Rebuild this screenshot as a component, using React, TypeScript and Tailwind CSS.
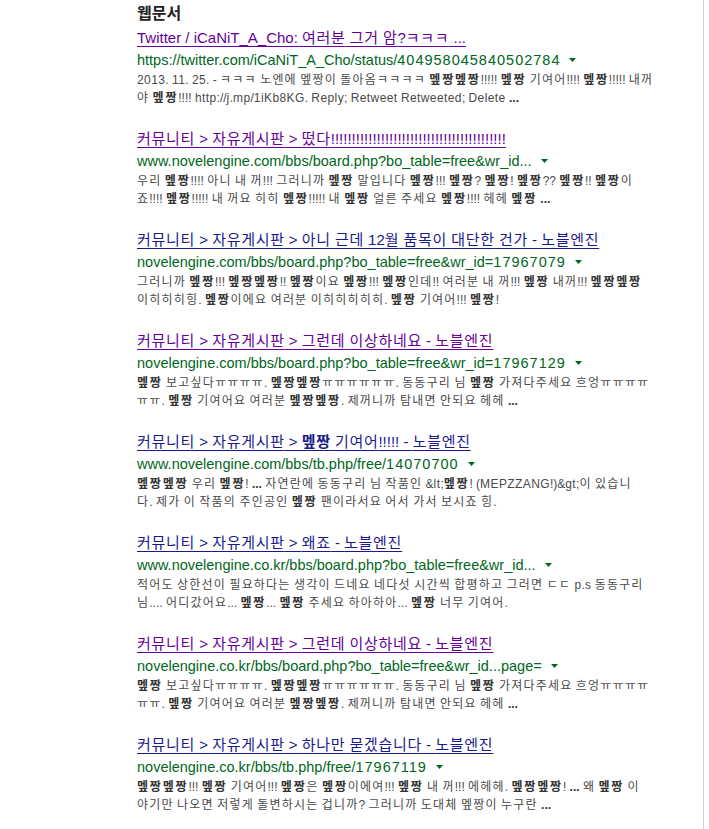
import React from "react";

const FONT = { fontFamily: '"Liberation Sans", "Noto Sans CJK KR", Arial, sans-serif' };

type Rule = { re: RegExp; cls: string };

function tokenize(text: string, rules: Rule[], keyBase: string) {
  const src = rules.map((r) => `(${r.re.source})`).join("|");
  const r = new RegExp(src, "g");
  const out: React.ReactNode[] = [];
  let last = 0;
  let k = 0;
  let m: RegExpExecArray | null;
  while ((m = r.exec(text)) !== null) {
    if (m[0].length === 0) {
      r.lastIndex++;
      continue;
    }
    if (m.index > last) out.push(<span key={`${keyBase}-${k++}`}>{text.slice(last, m.index)}</span>);
    let cls = "";
    for (let g = 0; g < rules.length; g++) {
      if (m[g + 1] !== undefined) {
        cls = rules[g].cls;
        break;
      }
    }
    out.push(
      <span key={`${keyBase}-${k++}`} className={cls}>
        {m[0]}
      </span>
    );
    last = m.index + m[0].length;
  }
  if (last < text.length) out.push(<span key={`${keyBase}-${k++}`}>{text.slice(last)}</span>);
  return out;
}

const HANGUL = /[\u3131-\u318E\uAC00-\uD7A3]+/;
const ALNUM = /[A-Za-z0-9]+/;

function Rich({ text, mode }: { text: string; mode: "title" | "snip" }) {
  const parts = text.split("**");
  return (
    <>
      {parts.map((p, i) => {
        const bold = i % 2 === 1;
        let inner: React.ReactNode;
        if (mode === "title") {
          inner = tokenize(p, [{ re: HANGUL, cls: "tracking-[0.7px]" }], `p${i}`);
        } else {
          inner = tokenize(
            p,
            [
              { re: HANGUL, cls: bold ? "tracking-[1.8px]" : "tracking-[1.2px]" },
              { re: ALNUM, cls: "tracking-[0.4px]" },
            ],
            `p${i}`
          );
        }
        if (bold) {
          return (
            <b key={i} className={mode === "snip" ? "font-bold text-[#333]" : "font-bold"}>
              {inner}
            </b>
          );
        }
        return <span key={i}>{inner}</span>;
      })}
    </>
  );
}

type Item = {
  title: string;
  visited: boolean;
  url: string;
  lines: [string, string];
};

const M = "멮짱";

const items: Item[] = [
  {
    title: "Twitter / iCaNiT_A_Cho: 여러분 그거 암?ㅋㅋㅋ ...",
    visited: true,
    url: "https://twitter.com/iCaNiT_A_Cho/status/404958045840502784",
    lines: [
      `2013. 11. 25. - ㅋㅋㅋ 노엔에 ${M}이 돌아옴ㅋㅋㅋㅋ **${M}${M}**!!!!! **${M}** 기여어!!!! **${M}**!!!!! 내꺼`,
      `야 **${M}**!!!! http://j.mp/1iKb8KG. Reply; Retweet Retweeted; Delete **...**`,
    ],
  },
  {
    title: "커뮤니티 > 자유게시판 > 떴다!!!!!!!!!!!!!!!!!!!!!!!!!!!!!!!!!!!!!!!!!!",
    visited: true,
    url: "www.novelengine.com/bbs/board.php?bo_table=free&wr_id...",
    lines: [
      `우리 **${M}**!!!! 아니 내 꺼!!! 그러니까 **${M}** 말입니다 **${M}**!!! **${M}**? **${M}**! **${M}**?? **${M}**!! **${M}**이`,
      `죠!!!! **${M}**!!!!! 내 꺼요 히히 **${M}**!!!!! 내 **${M}** 얼른 주세요 **${M}**!!!! 헤헤 **${M}** **...**`,
    ],
  },
  {
    title: "커뮤니티 > 자유게시판 > 아니 근데 12월 품목이 대단한 건가 - 노블엔진",
    visited: false,
    url: "novelengine.com/bbs/board.php?bo_table=free&wr_id=17967079",
    lines: [
      `그러니까 **${M}**!!! **${M}${M}**!! **${M}**이요 **${M}**!!! **${M}**인데!! 여러분 내 꺼!!! **${M}** 내꺼!!! **${M}${M}**`,
      `이히히히힝. **${M}**이에요 여러분 이히히히히히. **${M}** 기여어!!! **${M}**!`,
    ],
  },
  {
    title: "커뮤니티 > 자유게시판 > 그런데 이상하네요 - 노블엔진",
    visited: true,
    url: "novelengine.com/bbs/board.php?bo_table=free&wr_id=17967129",
    lines: [
      `**${M}** 보고싶다ㅠㅠㅠㅠ. **${M}${M}**ㅠㅠㅠㅠㅠㅠ. 동동구리 님 **${M}** 가져다주세요 흐엉ㅠㅠㅠㅠ`,
      `ㅠㅠ. **${M}** 기여어요 여러분 **${M}${M}**. 제꺼니까 탐내면 안되요 헤헤 **...**`,
    ],
  },
  {
    title: `커뮤니티 > 자유게시판 > **${M}** 기여어!!!!! - 노블엔진`,
    visited: false,
    url: "www.novelengine.com/bbs/tb.php/free/14070700",
    lines: [
      `**${M}${M}** 우리 **${M}**! **...** 자연란에 동동구리 님 작품인 &lt;**${M}**! (MEPZZANG!)&gt;이 있습니`,
      `다. 제가 이 작품의 주인공인 **${M}** 팬이라서요 어서 가서 보시죠 힝.`,
    ],
  },
  {
    title: "커뮤니티 > 자유게시판 > 왜죠 - 노블엔진",
    visited: false,
    url: "www.novelengine.co.kr/bbs/board.php?bo_table=free&wr_id...",
    lines: [
      "적어도 상한선이 필요하다는 생각이 드네요 네다섯 시간씩 합평하고 그러면 ㄷㄷ p.s 동동구리",
      `님.... 어디갔어요... **${M}**... **${M}** 주세요 하아하아... **${M}** 너무 기여어.`,
    ],
  },
  {
    title: "커뮤니티 > 자유게시판 > 그런데 이상하네요 - 노블엔진",
    visited: true,
    url: "novelengine.co.kr/bbs/board.php?bo_table=free&wr_id...page=",
    lines: [
      `**${M}** 보고싶다ㅠㅠㅠㅠ. **${M}${M}**ㅠㅠㅠㅠㅠㅠ. 동동구리 님 **${M}** 가져다주세요 흐엉ㅠㅠㅠㅠ`,
      `ㅠㅠ. **${M}** 기여어요 여러분 **${M}${M}**. 제꺼니까 탐내면 안되요 헤헤 **...**`,
    ],
  },
  {
    title: "커뮤니티 > 자유게시판 > 하나만 묻겠습니다 - 노블엔진",
    visited: false,
    url: "novelengine.co.kr/bbs/tb.php/free/17967119",
    lines: [
      `**${M}${M}**!!! **${M}** 기여어!!! **${M}**은 **${M}**이에여!!! **${M}** 내 꺼!!! 에헤헤. **${M}${M}**! **...** 왜 **${M}** 이`,
      `야기만 나오면 저렇게 돌변하시는 겁니까? 그러니까 도대체 ${M}이 누구란 **...**`,
    ],
  },
];

function Arrow() {
  return (
    <svg width="7" height="4" viewBox="0 0 7 4" className="ml-[9px] inline-block">
      <path d="M0 0 L7 0 L3.5 4 Z" fill="#006621" />
    </svg>
  );
}

function Result({ item }: { item: Item }) {
  const color = item.visited ? "text-[#660099]" : "text-[#1a1a8c]";
  return (
    <div className="flex flex-col">
      <div
        className={`${color} text-[15px] leading-[22px] whitespace-nowrap underline underline-offset-[3px] decoration-1`}
      >
        <Rich text={item.title} mode="title" />
      </div>
      <div className="text-[#006621] text-[14.5px] leading-[22px] whitespace-nowrap flex items-center">
        <span>{tokenize(item.url, [{ re: /[0-9]+/, cls: "tracking-[1px]" }], "u")}</span>
        <Arrow />
      </div>
      <div className="text-[#4a4a4a] text-[12px] leading-[18px] whitespace-nowrap">
        <div>
          <Rich text={item.lines[0]} mode="snip" />
        </div>
        <div>
          <Rich text={item.lines[1]} mode="snip" />
        </div>
      </div>
    </div>
  );
}

export default function App() {
  return (
    <div className="w-[709px] h-[829px] bg-white overflow-hidden" style={FONT}>
      <div className="w-[704px] h-full border-r border-[#d0d0d0] pl-[137px] pt-[4px]">
        <div className="text-[16px] leading-[20px] font-bold text-[#222]">웹문서</div>
        <div className="flex flex-col gap-[21px] mt-[3px]">
          {items.map((it, i) => (
            <Result key={i} item={it} />
          ))}
        </div>
      </div>
    </div>
  );
}
